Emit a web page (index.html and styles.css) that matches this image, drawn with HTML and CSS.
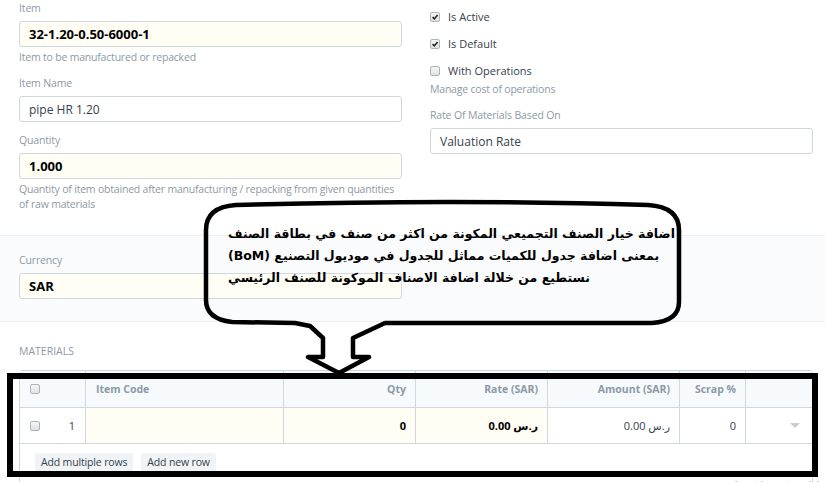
FILE: index.html
```html
<!DOCTYPE html>
<html lang="en">
<head>
<meta charset="utf-8">
<title>BOM</title>
<link rel="stylesheet" href="styles.css">
</head>
<body>
<div class="page">
  <div class="section main">
    <div class="col">
      <div class="group">
        <div class="label">Item</div>
        <div class="input req strong">32-1.20-0.50-6000-1</div>
        <div class="help">Item to be manufactured or repacked</div>
      </div>
      <div class="group">
        <div class="label">Item Name</div>
        <div class="input">pipe HR 1.20</div>
      </div>
      <div class="group">
        <div class="label">Quantity</div>
        <div class="input req strong">1.000</div>
        <div class="help">Quantity of item obtained after manufacturing / repacking from given quantities of raw materials</div>
      </div>
    </div>
    <div class="col right">
      <div class="check"><span class="cb on"><svg viewBox="0 0 10 10"><path d="M2 5.2 L4.2 7.4 L8.2 2.6"/></svg></span><span>Is Active</span></div>
      <div class="check"><span class="cb on"><svg viewBox="0 0 10 10"><path d="M2 5.2 L4.2 7.4 L8.2 2.6"/></svg></span><span>Is Default</span></div>
      <div class="check last"><span class="cb"></span><span>With Operations</span></div>
      <div class="help">Manage cost of operations</div>
      <div class="group spaced">
        <div class="label">Rate Of Materials Based On</div>
        <div class="input">Valuation Rate</div>
      </div>
    </div>
  </div>

  <div class="section currency">
    <div class="col">
      <div class="group">
        <div class="label">Currency</div>
        <div class="input req strong">SAR</div>
      </div>
    </div>
  </div>

  <div class="section materials">
    <div class="sec-head">MATERIALS</div>
    <div class="grid">
      <div class="grow head">
        <div class="cell c-check"><span class="cb"></span></div>
        <div class="cell">Item Code</div>
        <div class="cell num">Qty</div>
        <div class="cell num">Rate (SAR)</div>
        <div class="cell num">Amount (SAR)</div>
        <div class="cell num">Scrap %</div>
        <div class="cell last"></div>
      </div>
      <div class="grow data">
        <div class="cell c-check"><span class="cb"></span><span class="idx">1</span></div>
        <div class="cell req"></div>
        <div class="cell num req strong">0</div>
        <div class="cell num req strong"><span>ر.س 0.00</span></div>
        <div class="cell num"><span>ر.س 0.00</span></div>
        <div class="cell num">0</div>
        <div class="cell last caret-cell"><span class="caret"></span></div>
      </div>
      <div class="gfoot">
        <span class="btn">Add multiple rows</span>
        <span class="btn">Add new row</span>
      </div>
    </div>
  </div>

  <svg class="callout" width="825" height="482" viewBox="0 0 825 482">
    <path d="M236 205 C380 201 520 201 648 205 Q679 207 679 230 L679 302 Q679 321 652 323 L385 323 L353 338 L353 357 L369 357 L339 373 L308 357 L323 357 L323 338 L310 326 L295 323 L232 322 Q206 319 206 300 L206 230 Q206 207 236 205 Z"/>
  </svg>
  <div class="callout-text">
    <div class="ln">اضافة خيار الصنف التجميعي المكونة من اكثر من صنف في بطاقة الصنف</div>
    <div class="ln">بمعنى اضافة جدول للكميات مماثل للجدول في موديول التصنيع (BoM)</div>
    <div class="ln">نستطيع من خلالة اضافة الاصناف الموكونة للصنف الرئيسي</div>
  </div>
  <div class="hl-box"></div>
  <div class="watermark">Activate Windows</div>
</div>
</body>
</html>
```

FILE: styles.css
```css
* { box-sizing: border-box; }
html, body { margin: 0; padding: 0; background: #fff; }
body {
  font-family: "Open Sans", "DejaVu Sans", sans-serif;
  color: #36414c;
  font-size: 11px;
}
.page {
  position: relative;
  width: 825px;
  height: 482px;
  overflow: hidden;
}
.section {
  display: grid;
  grid-template-columns: 383px 383px;
  column-gap: 28px;
  padding: 0 12px 0 19px;
}
.section.main { padding-bottom: 13px; border-bottom: 1px solid #ebeff2; }
.section.currency {
  background: #fafbfc;
  padding-top: 16px;
  padding-bottom: 12px;
  border-bottom: 1px solid #ebeff2;
}
.section.materials { display: block; padding-top: 22px; }

.group { margin-bottom: 10px; }
.group.spaced { margin-top: 10px; }
.label { font-size: 10.5px; line-height: 17px; color: #8d99a6; margin-bottom: 4px; letter-spacing: -0.15px; }
.input {
  height: 26px;
  border: 1px solid #d1d8dd;
  border-radius: 3px;
  padding: 0 9px;
  display: flex;
  align-items: center;
  font-size: 12px;
  color: #36414c;
  background: #fff;
}
.req { background: #fffdf4; }
.strong { font-weight: 700; color: #000; }
.input.strong { font-size: 13px; }
.help { font-size: 10.5px; line-height: 15px; color: #8d99a6; margin-top: 3px; letter-spacing: -0.2px; }

.col.right { padding-top: 8px; }
.check {
  display: flex;
  align-items: center;
  height: 17px;
  margin-bottom: 10px;
  font-size: 11px;
  color: #36414c;
}
.check.last { margin-bottom: 0; }
.cb {
  display: inline-flex;
  width: 10px;
  height: 10px;
  border: 1px solid #adb4ba;
  border-radius: 2px;
  background: linear-gradient(#f4f5f6, #dfe2e5);
  margin-right: 8px;
  flex: none;
}
.cb svg { width: 8px; height: 8px; }
.cb svg path { fill: none; stroke: #222; stroke-width: 2; }

.sec-head { font-size: 10.5px; line-height: 15px; color: #8d99a6; margin-bottom: 11px; }
.grid {
  width: 794px;
  border: 1px solid #d1d8dd;
  border-radius: 3px 3px 0 0;
}
.grow {
  display: grid;
  grid-template-columns: 66px 198px 132px 132px 132px 66px 66px;
  border-bottom: 1px solid #d1d8dd;
}
.grow.head { height: 37px; background: #f7fafc; font-weight: 700; color: #8d99a6; font-size: 10.5px; }
.grow.data { height: 36px; font-size: 11px; color: #36414c; }
.cell {
  border-right: 1px solid #d1d8dd;
  display: flex;
  align-items: center;
  padding: 0 10px;
}
.cell.last { border-right: none; }
.cell.num { justify-content: flex-end; padding-right: 9px; }
.cell.strong { color: #000; }
.c-check { padding-left: 10px; }
.c-check .cb { margin-right: 0; }
.idx { margin-left: auto; }
.caret-cell { justify-content: flex-end; padding-right: 12px; }
.caret {
  width: 0; height: 0;
  border-left: 5px solid transparent;
  border-right: 5px solid transparent;
  border-top: 5px solid #c9ced3;
}
.gfoot {
  height: 40px;
  padding: 9px 15px 0;
  display: flex;
  gap: 8px;
  align-items: flex-start;
}
.btn {
  height: 19px;
  line-height: 19px;
  padding: 0 6px;
  font-size: 10.5px;
  letter-spacing: -0.15px;
  background: #f0f4f7;
  border-radius: 3px;
  color: #36414c;
}

.callout { position: absolute; left: 0; top: 0; pointer-events: none; }
.callout path { fill: none; stroke: #000; stroke-width: 4.5; stroke-linejoin: round; }
.callout-text {
  position: absolute;
  left: 228px;
  top: 223px;
  width: 448px;
  font-family: "DejaVu Sans", sans-serif;
  font-weight: 700;
  font-size: 12.5px;
  line-height: 22px;
  color: #000;
}
.callout-text .ln { direction: rtl; text-align: left; white-space: nowrap; }
.hl-box {
  position: absolute;
  left: 7px;
  top: 373px;
  width: 811px;
  height: 104px;
  border: 6px solid #000;
}
.watermark {
  position: absolute;
  left: 730px;
  top: 474px;
  font-family: "Open Sans", sans-serif;
  font-size: 20px;
  color: rgba(160, 160, 160, 0.55);
  white-space: nowrap;
}
```
